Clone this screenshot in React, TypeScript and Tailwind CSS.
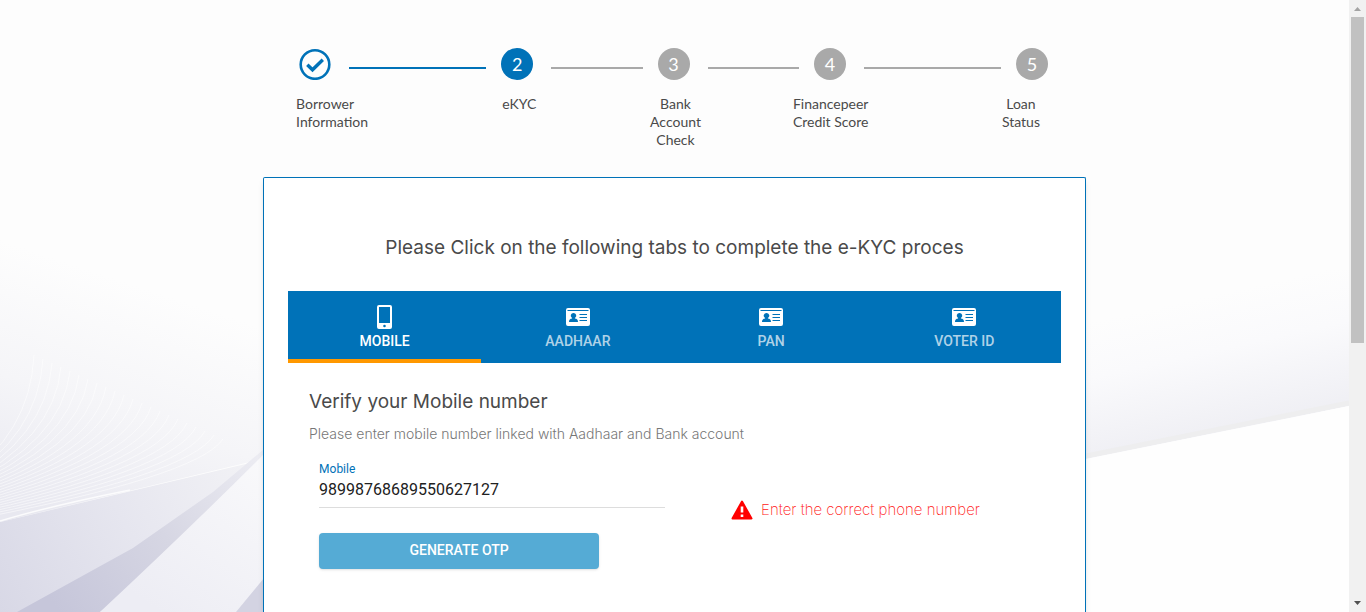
import React from "react";

const steps = [
  { n: 1, label: "Borrower Information", box: "w-20 text-left", done: true },
  { n: 2, label: "eKYC", box: "mx-auto", active: true },
  { n: 3, label: "Bank Account Check", box: "mx-auto w-14" },
  { n: 4, label: "Financepeer Credit Score", box: "mx-auto w-24" },
  { n: 5, label: "Loan Status", box: "mr-2 ml-auto w-10" },
];

function CheckCircle() {
  return (
    <svg viewBox="0 0 32 32" className="size-8 shrink-0" fill="none" stroke="#0072b8" role="img" aria-label="Completed">
      <circle cx="16" cy="16.500" r="14.300" strokeWidth="2.600" />
      <path d="M8.300 16.800l5.200 5 10.300-10" strokeWidth="3.400" />
    </svg>
  );
}

function IdCard() {
  return (
    <svg viewBox="0 0 24 24" className="size-6" aria-hidden="true">
      <path
        fill="#fff"
        fillRule="evenodd"
        d="M2 3h20a2 2 0 0 1 2 2v14a2 2 0 0 1-2 2H2a2 2 0 0 1-2-2V5a2 2 0 0 1 2-2zM1.500 5v1h21V5zM13.500 9v1H21V9zM13.500 12v1H21v-1zM13.500 15v1H21v-1zM7.500 8a2.700 2.600 0 0 0-1.800 4.600L6.200 13.500C4 13.700 3 14.800 3 17h9c0-2.200-1-3.300-3.200-3.500l.5-.9A2.700 2.600 0 0 0 7.500 8z"
      />
    </svg>
  );
}

function Phone() {
  return (
    <svg viewBox="0 0 24 24" className="size-6" aria-hidden="true">
      <path
        fill="#fff"
        fillRule="evenodd"
        d="M6 0h11a2 2 0 0 1 2 2v20a2 2 0 0 1-2 2H6a2 2 0 0 1-2-2V2a2 2 0 0 1 2-2zM6 2v16h11V2zM11.500 19.700a1.300 1.300 0 1 0 0 2.600 1.300 1.300 0 0 0 0-2.600z"
      />
    </svg>
  );
}

const curves = Array.from({ length: 22 }, (_, i) => i);

function Background() {
  return (
    <svg className="absolute inset-0 size-full" viewBox="0 0 1349 612" preserveAspectRatio="none" aria-hidden="true">
      <defs>
        <linearGradient id="mist" gradientUnits="userSpaceOnUse" x1="120" y1="280" x2="40" y2="520">
          <stop offset="0" stopColor="#fdfdfd" />
          <stop offset="0.5" stopColor="#f5f5f8" />
          <stop offset="1" stopColor="#e8e8f0" />
        </linearGradient>
        <linearGradient id="ground" gradientUnits="userSpaceOnUse" x1="264" y1="460" x2="0" y2="612">
          <stop offset="0" stopColor="#f3f3f6" />
          <stop offset="0.5" stopColor="#e6e6ef" />
          <stop offset="1" stopColor="#d8d8e6" />
        </linearGradient>
        <linearGradient id="fold" gradientUnits="userSpaceOnUse" x1="264" y1="455" x2="60" y2="612">
          <stop offset="0" stopColor="#ededf3" />
          <stop offset="0.5" stopColor="#d6d6e3" />
          <stop offset="1" stopColor="#c6c6da" />
        </linearGradient>
        <linearGradient id="light" gradientUnits="userSpaceOnUse" x1="264" y1="460" x2="160" y2="612">
          <stop offset="0" stopColor="#f9f9fb" />
          <stop offset="1" stopColor="#ededf4" />
        </linearGradient>
        <linearGradient id="right" gradientUnits="userSpaceOnUse" x1="1190" y1="300" x2="1220" y2="434">
          <stop offset="0" stopColor="#fdfdfd" />
          <stop offset="0.4" stopColor="#fafafc" />
          <stop offset="1" stopColor="#efeff4" />
        </linearGradient>
      </defs>
      <rect width="1349" height="612" fill="#fdfdfd" />
      <path d="M0 240H300V450L0 522z" fill="url(#mist)" />
      <g fill="none" stroke="#fff" strokeOpacity="0.500">
        {curves.map((i) => (
          <path key={i} d={`M${34 + i * 9} ${355 + i * 4}Q${30 + i * 8} ${435 + i * 2} -40 ${480 + i * 2}`} />
        ))}
      </g>
      <path d="M0 522L300 451V612H0z" fill="url(#ground)" />
      <path d="M0 521Q50 506 130 490" stroke="#fff" strokeWidth="1.500" strokeOpacity="0.800" fill="none" />
      <path d="M17 612L133 548L213 492L264 449V480L100 612z" fill="url(#fold)" />
      <path d="M100 612Q190 528 264 454V612z" fill="url(#light)" />
      <path d="M236 612L264 578V612z" fill="#d3d3e2" />
      <path d="M1086 270H1349V406L1086 459z" fill="url(#right)" />
      <path d="M1086 456L1349 403" stroke="#eeeeef" strokeWidth="5" />
      <path d="M1086 459L1349 406V612H1086z" fill="#fefefe" />
    </svg>
  );
}

function Stepper() {
  return (
    <div className="pt-12 pb-7">
      <div className="flex items-center pr-[38px] pl-9">
        {steps.map((s, i) => (
          <React.Fragment key={s.n}>
            {i > 0 && (
              <span
                className={`mt-2 mr-[15px] ml-[18px] h-0.5 ${i === 1 || i === 4 ? "grow-3" : "grow-2"} ${
                  i === 1 ? "bg-[#0072b8]" : "bg-[#a9a9a9]"
                }`}
              />
            )}
            {s.done ? (
              <CheckCircle />
            ) : (
              <span
                className={`flex size-8 shrink-0 items-center justify-center rounded-full font-[Lato] text-lg text-white ${
                  s.active ? "bg-[#0072b8]" : "bg-[#a9a9a9]"
                }`}
              >
                {s.n}
              </span>
            )}
          </React.Fragment>
        ))}
      </div>
      <div className="mt-[15px] grid grid-cols-[145fr_156fr_156fr_154fr_141fr] pr-[37px] pl-[33px] text-center font-[Lato] text-sm leading-[18px] text-[#4a4a4a]">
        {steps.map((s) => (
          <p key={s.n} className={s.box}>
            {s.label}
          </p>
        ))}
      </div>
    </div>
  );
}

const tabs = ["MOBILE", "AADHAAR", "PAN", "VOTER ID"];

export default function App() {
  const [tab, setTab] = React.useState(0);
  return (
    <div className="flex h-screen overflow-hidden bg-white">
      <main className="relative isolate min-w-0 flex-1">
        <div className="absolute inset-0 -z-10">
          <Background />
        </div>
        <div className="mx-auto flex h-full w-[61%] flex-col">
          <Stepper />
          <section className="flex-1 rounded-t-xs border border-b-0 border-[#0072b8] bg-white px-6 pt-14 shadow-md">
            <h1 className="text-center font-[Inter] text-[19px] leading-7 text-[#4a4a4a]">
              Please Click on the following tabs to complete the e-KYC proces
            </h1>
            <div role="tablist" className="mt-[29px] grid grid-cols-4 bg-[#0072b8]">
              {tabs.map((t, i) => (
                <button
                  key={t}
                  role="tab"
                  aria-selected={tab === i}
                  onClick={() => setTab(i)}
                  className={`flex h-[72px] flex-col items-center border-b-4 pt-3.5 font-[Roboto] text-sm leading-6 font-medium ${
                    tab === i ? "border-[#ff9800] text-white" : "border-transparent text-white/70"
                  }`}
                >
                  {i === 0 ? <Phone /> : <IdCard />}
                  {t}
                </button>
              ))}
            </div>
            <div className="px-[21px] pt-[25px]">
              <h2 className="font-[Inter] text-[19px] leading-7 text-[#4a4a4a]">Verify your Mobile number</h2>
              <p className="mt-2 font-[Inter] text-sm leading-5 font-light text-[#777]">
                Please enter mobile number linked with Aadhaar and Bank account
              </p>
              <div className="mt-[15px] flex items-end pl-2.5">
                <div className="flex w-[48%] flex-col border-b border-[#ddd] font-[Roboto]">
                  <label htmlFor="mobile" className="text-xs leading-5 text-[#0072b8]">
                    Mobile
                  </label>
                  <input
                    id="mobile"
                    type="tel"
                    defaultValue="98998768689550627127"
                    className="h-7 w-full bg-transparent pb-2 text-base text-[#212121] outline-none"
                  />
                </div>
                <p
                  role="alert"
                  className="-mb-3 ml-[66px] flex items-center gap-2 font-[Inter] text-[15px] leading-5 font-extralight text-[#ff2020]"
                >
                  <svg viewBox="0 0 22 20" className="h-5 w-[22px]" aria-hidden="true">
                    <path d="M11 1.500L20.500 18.500H1.500z" fill="#f00" stroke="#f00" strokeWidth="2" strokeLinejoin="round" />
                    <path d="M11 6.500v6M11 14.500v2.500" stroke="#fff" strokeWidth="2.600" />
                  </svg>
                  Enter the correct phone number
                </p>
              </div>
              <button className="mt-[25px] ml-2.5 h-9 w-[280px] rounded-sm bg-[#55abd5] pb-0.5 font-[Roboto] text-sm font-medium text-white shadow">
                GENERATE OTP
              </button>
            </div>
          </section>
        </div>
      </main>
      <div aria-hidden="true" className="flex w-[17px] shrink-0 flex-col items-center bg-[#f1f1f1]">
        <svg viewBox="0 0 17 17" className="size-[17px]">
          <path d="M5 11h7L8.500 7z" fill="#a3a3a3" />
        </svg>
        <div className="h-[326px] w-[13px] bg-[#c1c1c1]" />
        <svg viewBox="0 0 17 17" className="mt-auto size-[17px]">
          <path d="M5 6h7L8.500 10z" fill="#505050" />
        </svg>
      </div>
    </div>
  );
}
